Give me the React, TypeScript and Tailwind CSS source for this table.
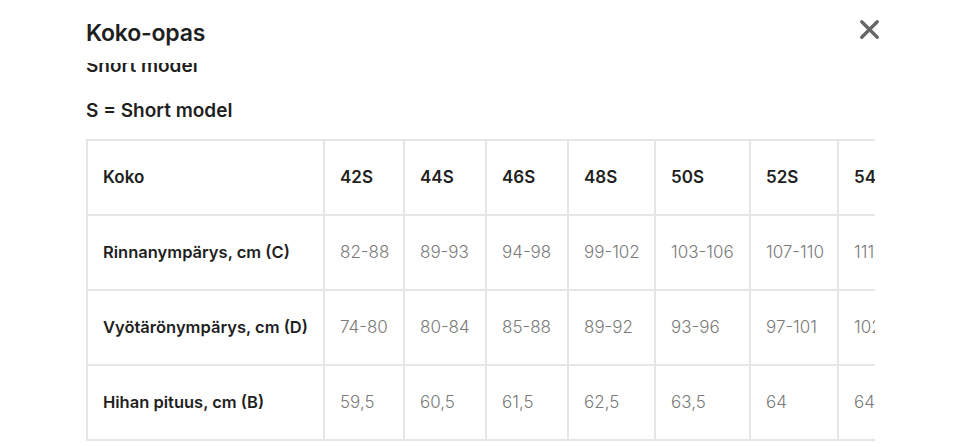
import { X } from "lucide-react";

type Row = { label: string; values: string[] };

const sizes = ["42S", "44S", "46S", "48S", "50S", "52S", "54S"];
const widths = ["w-[80px]", "w-[82px]", "w-[82px]", "w-[87px]", "w-[95px]", "w-[88px]", "w-[88px]"];

const rows: Row[] = [
  { label: "Rinnanympärys, cm (C)", values: ["82-88", "89-93", "94-98", "99-102", "103-106", "107-110", "111-114"] },
  { label: "Vyötärönympärys, cm (D)", values: ["74-80", "80-84", "85-88", "89-92", "93-96", "97-101", "102-105"] },
  { label: "Hihan pituus, cm (B)", values: ["59,5", "60,5", "61,5", "62,5", "63,5", "64", "64,5"] },
];

export default function App() {
  return (
    <div className="h-[443px] w-[960px] overflow-hidden bg-white font-['Inter',sans-serif] text-[#1f1f1f]">
      {/* Header */}
      <div className="flex items-start justify-between pl-[86px] pr-[75px] pt-[17px] h-[63px]">
        <h1 className="text-[23px] font-semibold tracking-[-0.2px] leading-[32px]">Koko-opas</h1>
        <button className="-mt-[3px] text-[#666]">
          <X size={31} strokeWidth={2.6} />
        </button>
      </div>

      {/* Scrolled content */}
      <div className="h-[380px] overflow-hidden pl-[86px] pr-[85px]">
        <div className="-mt-[9px]">
          <p className="text-[19px] font-semibold leading-[24px]">Short model</p>
          <p className="mt-[21px] text-[19px] font-semibold leading-[24px]">S = Short model</p>

          <div className="mt-[16px] overflow-hidden">
            <table className="border-collapse table-fixed w-max text-[17px]">
              <thead>
                <tr className="h-[75px]">
                  <th className="w-[237px] border-2 border-[#e6e6e6] pl-[15px] text-left font-semibold">Koko</th>
                  {sizes.map((s, i) => (
                    <th key={s} className={`${widths[i]} border-2 border-[#e6e6e6] pl-[15px] text-left font-semibold`}>
                      {s}
                    </th>
                  ))}
                </tr>
              </thead>
              <tbody>
                {rows.map((r) => (
                  <tr key={r.label} className="h-[75px]">
                    <td className="border-2 border-[#e6e6e6] pl-[15px] text-[16.5px] font-semibold whitespace-nowrap">{r.label}</td>
                    {r.values.map((v, i) => (
                      <td key={i} className="border-2 border-[#e6e6e6] pl-[15px] text-[#7a7a7a] font-light whitespace-nowrap">
                        {v}
                      </td>
                    ))}
                  </tr>
                ))}
              </tbody>
            </table>
          </div>
        </div>
      </div>
    </div>
  );
}
